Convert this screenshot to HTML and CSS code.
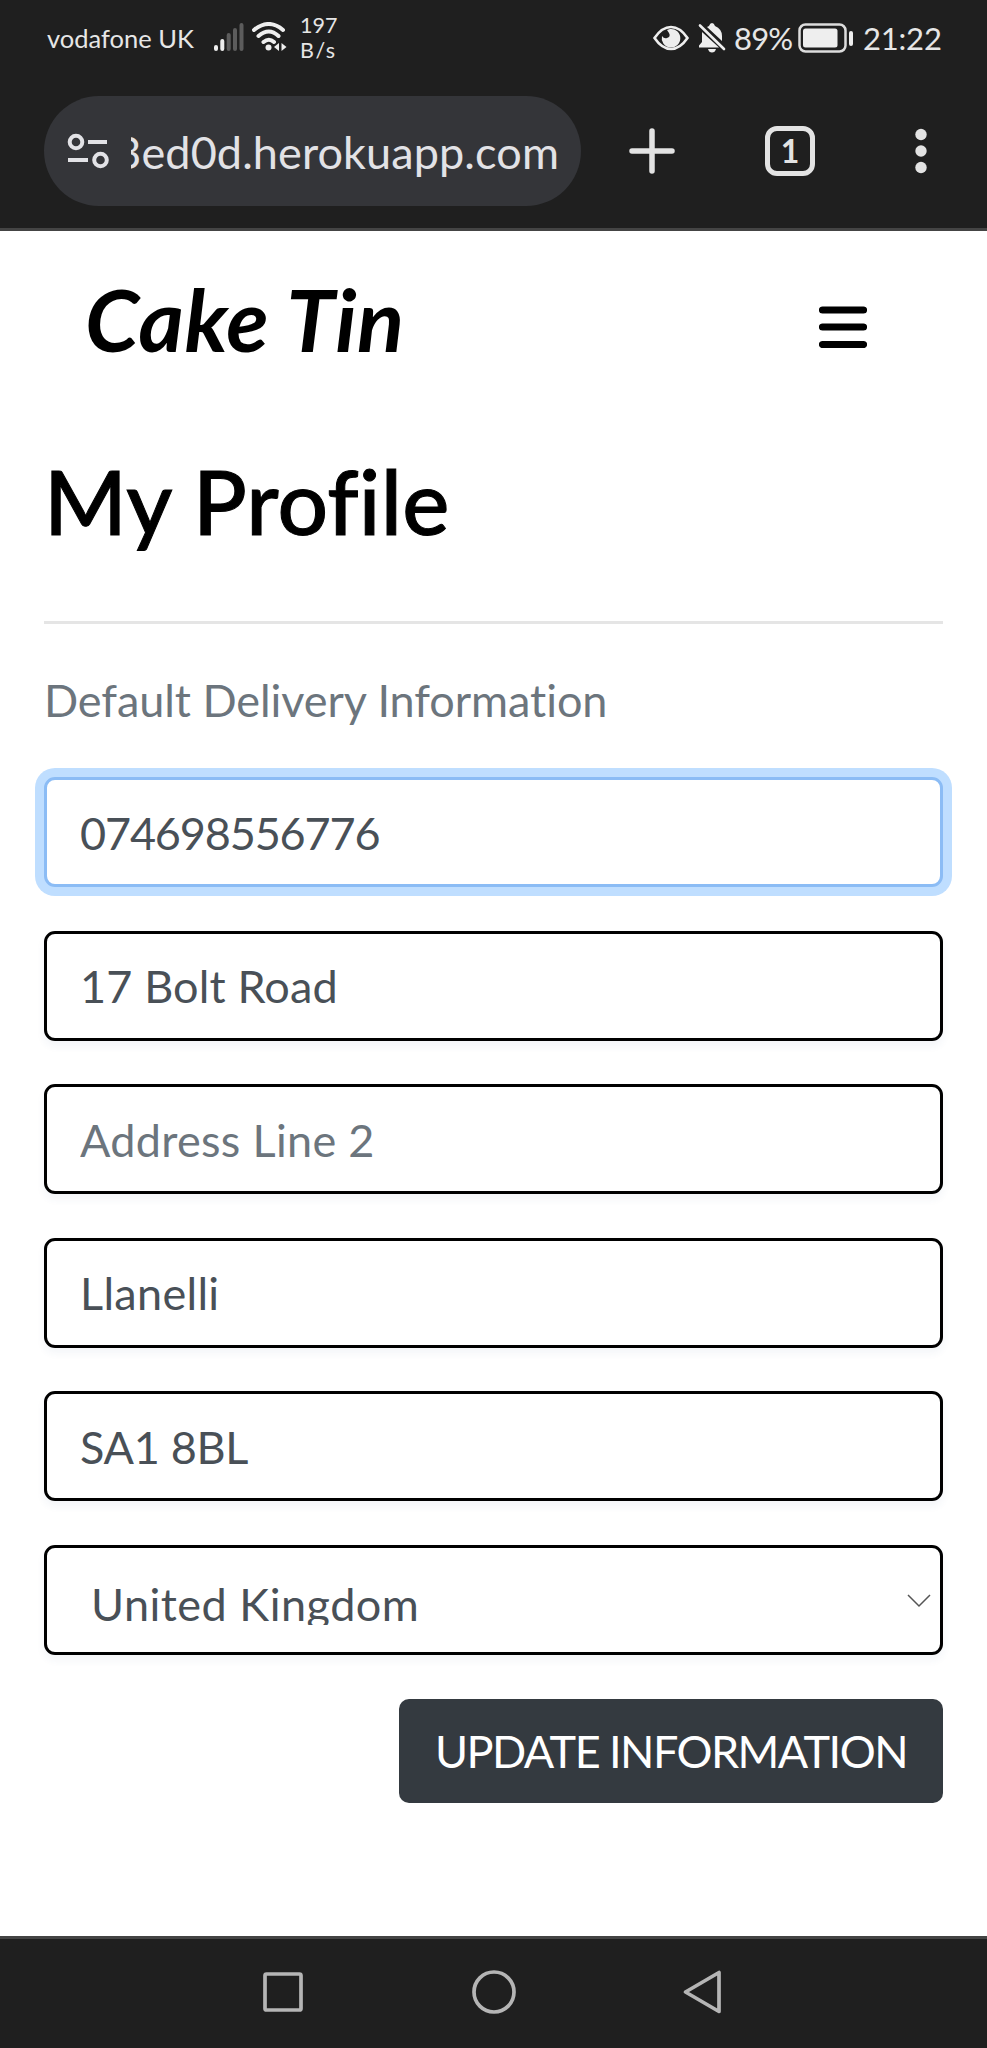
FILE: index.html
```html
<!DOCTYPE html>
<html lang="en">
<head>
<meta charset="utf-8">
<title>Cake Tin - My Profile</title>
<link rel="stylesheet" href="styles.css">
</head>
<body>
<div class="top">
  <div class="status">
    <div class="status-left">
      <span class="carrier">vodafone UK</span>
      <svg class="signal" width="32" height="30" viewBox="0 0 32 30"><g stroke-width="4" stroke-linecap="round"><path stroke="#eee" d="M3 25v2M9.300 19v8"/><path stroke="#5c5c5c" d="M15.700 13v14M22 8v19M28.500 3v24"/></g></svg>
      <svg class="wifi" width="36" height="30" viewBox="0 0 36 30"><g fill="none" stroke="#eee" stroke-width="4" stroke-linecap="round"><path d="M2 8Q17-4 31 8M6.500 14Q17 5 26.500 14M11.500 20Q17 15.500 22 20"/></g><circle cx="16.500" cy="25.500" r="3" fill="#eee"/><path fill="#eee" d="M22 25l5-4v8zM34.500 25l-5-4v8z"/></svg>
      <span class="speed"><span>197</span><span class="unit">B/s</span></span>
    </div>
    <div class="status-right">
      <svg class="eye" width="36" height="26" viewBox="0 0 36 26"><path d="M1.500 13Q9 2 18 2t16.500 11Q27 24 18 24T1.500 13z" fill="none" stroke="#eee" stroke-width="2.600"/><path d="M17 4a9.300 9.300 0 1 1-8 7q2 3 5 2 4-1 2-5l-2-3z" fill="#eee"/></svg>
      <svg class="bell" width="28" height="30" viewBox="0 0 28 30"><path fill="#eee" d="M4 9L21 24.500H1v-2l3-3.500zM9 4l2-1q1-3 3-3t3 3q7 3 7 10v5zM10 26h8q-1 3.500-4 3.500T10 26z"/><path d="M2 2.500L26 26" stroke="#eee" stroke-width="2.600" stroke-linecap="round"/></svg>
      <span class="percent">89%</span>
      <svg class="battery" width="56" height="30" viewBox="0 0 56 30"><rect x="1.500" y="1.500" width="46" height="27" rx="6" fill="none" stroke="#ddd" stroke-width="2.500"/><rect x="5" y="5.500" width="34.500" height="19" rx="2.500" fill="#eee"/><rect x="51" y="8" width="4" height="15" rx="2" fill="#eee"/></svg>
      <span class="time">21:22</span>
    </div>
  </div>
  <div class="browser">
    <div class="address">
      <svg class="tune" width="42" height="36" viewBox="0 0 42 36"><g fill="none" stroke="#e2e2e6" stroke-width="4"><circle cx="9" cy="9" r="6.300"/><path d="M21 9h19M1 27h20"/><circle cx="33.500" cy="27" r="6.300"/></g></svg>
      <div class="url"><span>3ed0d.herokuapp.com</span></div>
    </div>
    <svg class="plus" width="46" height="46" viewBox="0 0 46 46"><path d="M23 3v40M3 23h40" stroke="#e3e3e3" stroke-width="5.500" stroke-linecap="round"/></svg>
    <div class="tabs">1</div>
    <svg class="dots" width="12" height="46" viewBox="0 0 12 46"><g fill="#e3e3e3"><circle cx="6" cy="6.500" r="5.700"/><circle cx="6" cy="23" r="5.700"/><circle cx="6" cy="39.500" r="5.700"/></g></svg>
  </div>
</div>
<main class="page">
  <header class="site">
    <a class="logo">Cake Tin</a>
    <svg class="menu" width="48" height="42" viewBox="0 0 48 42"><path d="M3.500 4h41M3.500 21h41M3.500 38.500h41" stroke="#000" stroke-width="7.200" stroke-linecap="round"/></svg>
  </header>
  <h1 class="title">My Profile</h1>
  <p class="subtitle">Default Delivery Information</p>
  <form class="form">
    <input class="field phone" value="074698556776">
    <input class="field street" value="17 Bolt Road">
    <input class="field line2" placeholder="Address Line 2">
    <input class="field town" value="Llanelli">
    <input class="field postcode" value="SA1 8BL">
    <div class="field country"><span class="country-name">United Kingdom</span>
      <svg width="24" height="14" viewBox="0 0 24 14"><path d="M1 1l11 11L23 1" fill="none" stroke="#555" stroke-width="1.500"/></svg>
    </div>
    <button class="submit" type="button">UPDATE INFORMATION</button>
  </form>
</main>
<nav class="system">
  <svg width="46" height="46" viewBox="0 0 46 46"><rect x="5" y="5" width="36" height="36" rx="1.500"/></svg>
  <svg width="46" height="46" viewBox="0 0 46 46"><circle cx="23" cy="23" r="20"/></svg>
  <svg width="46" height="46" viewBox="0 0 46 46"><path d="M3.500 23L37 3.500v39z" stroke-linejoin="round"/></svg>
</nav>
</body>
</html>
```
FILE: styles.css
```css
* { box-sizing: border-box; }
body {
  margin: 0;
  height: 2048px;
  display: flex;
  flex-direction: column;
  background: #fff;
  font-family: Lato, "Open Sans", sans-serif;
  font-variant-ligatures: none;
  overflow: hidden;
}
svg { display: block; flex: none; }
.top { height: 231px; flex: none; background: #1f1f1f; border-bottom: 3px solid #444; }
.status { height: 76px; padding: 0 47px 0 47px; display: flex; justify-content: space-between; color: #e6e6e6; white-space: nowrap; }
.status-left, .status-right { display: flex; align-items: center; }
.carrier { width: 166px; font-size: 25.500px; }
.wifi { margin: 0 0 2px 7px; }
.signal { margin-bottom: 2px; }
.speed { margin-left: 12px; display: flex; flex-direction: column; font-size: 21.500px; line-height: 25px; }
.unit { letter-spacing: 1.500px; }
.eye { margin-right: 9px; }
.bell { margin-right: 8px; }
.percent { width: 64px; font-size: 31px; letter-spacing: -.8px; }
.battery { margin-right: 9px; }
.time { width: 77px; font-size: 31px; letter-spacing: -.2px; }
.percent, .time { padding-bottom: 1px; }
.browser { height: 152px; display: flex; padding: 20px 60px 0 44px; }
.address { width: 538px; height: 110px; border-radius: 55px; background: #343539; display: flex; align-items: center; padding-left: 23px; }
.url { width: 428px; margin-left: 22px; overflow: hidden; display: flex; justify-content: flex-end; color: #e2e2e6; font-size: 45px; line-height: 60px; letter-spacing: .1px; padding-top: 2px; white-space: nowrap; }
.plus { margin: 32px 90px 0 48px; }
.tabs { width: 50px; height: 50px; margin-top: 30px; border: 5.500px solid #e3e3e3; border-radius: 12px; color: #e3e3e3; font-size: 32px; font-weight: 700; line-height: 39px; text-align: center; }
.dots { margin: 32px 0 0 100px; }
.page { flex: 1; padding: 0 44px; }
.site { height: 194px; display: flex; justify-content: space-between; padding: 34px 76px 0 41px; }
.logo { padding-top: 4px; font: italic 700 87px/100px Lato, sans-serif; letter-spacing: .5px; color: #000; white-space: nowrap; }
.menu { margin-top: 41px; }
.title { margin: 0; height: 199px; border-bottom: 3px solid #e5e5e5; font-size: 89px; line-height: 151px; font-weight: 500; letter-spacing: .2px; -webkit-text-stroke: 1px #000; color: #000; white-space: nowrap; }
.subtitle { margin: 0; height: 153px; padding-top: 43px; font-size: 45px; line-height: 66px; letter-spacing: -.05px; color: #6c757d; white-space: nowrap; }
.form { display: grid; grid-template-columns: 1fr; gap: 43.600px; }
.field { width: 100%; height: 110px; padding: 1px 33px 0; border: 3px solid #000; border-radius: 11px; background: #fff; box-shadow: 0 5px 8px rgba(50, 80, 130, .06); color: #495057; font: 45px Lato, sans-serif; letter-spacing: .3px; outline: 0; }
.field::placeholder { color: #6c757d; opacity: 1; }
.phone { border-color: #8bbcf5; box-shadow: 0 0 0 9px #bfdeff; letter-spacing: -1.150px; }
.street { letter-spacing: .15px; }
.postcode { letter-spacing: -.3px; }
.country { display: flex; justify-content: space-between; padding: 26px 9px 0 44px; letter-spacing: .5px; }
.country-name { height: 51.500px; line-height: 61px; overflow: hidden; }
.country svg { margin-top: 20px; }
.submit { justify-self: end; width: 544px; height: 104px; padding: 0; border: 0; border-radius: 10px; background: #343a40; color: #fff; font: 45px Lato, sans-serif; letter-spacing: -1.550px; white-space: nowrap; }
.system { height: 112px; flex: none; display: flex; justify-content: center; gap: 165px; background: #1f1f1f; border-top: 3px solid #444; padding-top: 30px; }
.system svg { fill: none; stroke: #b5b5b5; stroke-width: 3.700; }
```
